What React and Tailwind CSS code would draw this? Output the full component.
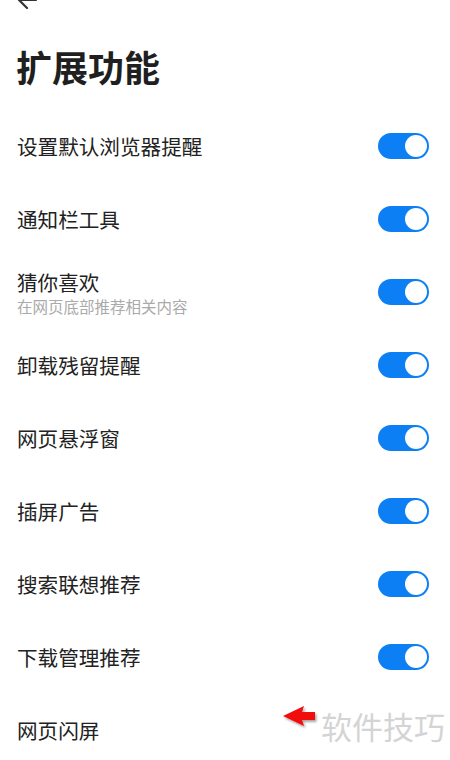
import React, { useState } from "react";

const items = [
  { label: "设置默认浏览器提醒", on: true },
  { label: "通知栏工具", on: true },
  { label: "猜你喜欢", sub: "在网页底部推荐相关内容", on: true },
  { label: "卸载残留提醒", on: true },
  { label: "网页悬浮窗", on: true },
  { label: "插屏广告", on: true },
  { label: "搜索联想推荐", on: true },
  { label: "下载管理推荐", on: true },
  { label: "网页闪屏", on: false },
];

function Toggle({ on, onClick }) {
  return (
    <button
      onClick={onClick}
      className={
        "w-[51px] h-[26px] rounded-full flex items-center p-[2px] shrink-0 " +
        (on ? "bg-[#0d7ff5] justify-end" : "bg-[#e5e5e5] justify-start")
      }
    >
      <span className="w-[22px] h-[22px] rounded-full bg-white" />
    </button>
  );
}

export default function App() {
  const [rows, setRows] = useState(items);

  function flip(i) {
    setRows(rows.map((r, j) => (j === i ? { ...r, on: !r.on } : r)));
  }

  return (
    <div
      className="relative w-[450px] h-[760px] overflow-hidden bg-white"
      style={{ fontFamily: '"Noto Sans CJK SC", "Noto Sans", sans-serif' }}
    >
      <div className="h-0 px-[14px]">
        <svg width="26" height="26" viewBox="0 0 26 26" className="-mt-[13px]">
          <path
            d="M22 13H5M13 5l-8 8 8 8"
            fill="none"
            stroke="#333"
            strokeWidth="2.2"
            strokeLinecap="round"
            strokeLinejoin="round"
          />
        </svg>
      </div>

      <h1 className="pt-[54px] pl-[16px] text-[36px] leading-[50px] font-semibold text-[#1f1f1f]">
        扩展功能
      </h1>

      <div className="mt-[18px]">
        {rows.map((r, i) => (
          <div
            key={r.label}
            className="h-[73px] flex items-center justify-between pl-[17px] pr-[21px]"
          >
            <div className="flex flex-col">
              <span className="text-[20.6px] leading-[28px] text-[#222]">
                {r.label}
              </span>
              {r.sub && (
                <span className="text-[15.5px] leading-[20px] text-[#aaa]">
                  {r.sub}
                </span>
              )}
            </div>
            {r.on && <Toggle on={r.on} onClick={() => flip(i)} />}
          </div>
        ))}
      </div>

      <div className="absolute left-[281px] top-[705px] flex items-center gap-[2px]">
        <svg width="38" height="28" viewBox="0 0 38 28" className="-mt-[16px]">
          <defs>
            <filter id="sh" x="-20%" y="-20%" width="150%" height="160%">
              <feDropShadow dx="1.5" dy="2" stdDeviation="1.2" floodColor="#000" floodOpacity="0.35" />
            </filter>
          </defs>
          <polygon
            points="2,12 23,2 21,8 34,8 34,16 21,16 23,22"
            fill="#f20d0d"
            filter="url(#sh)"
          />
        </svg>
        <span className="text-[31px] leading-[42px] text-[#d4d4d4]">软件技巧</span>
      </div>
    </div>
  );
}
